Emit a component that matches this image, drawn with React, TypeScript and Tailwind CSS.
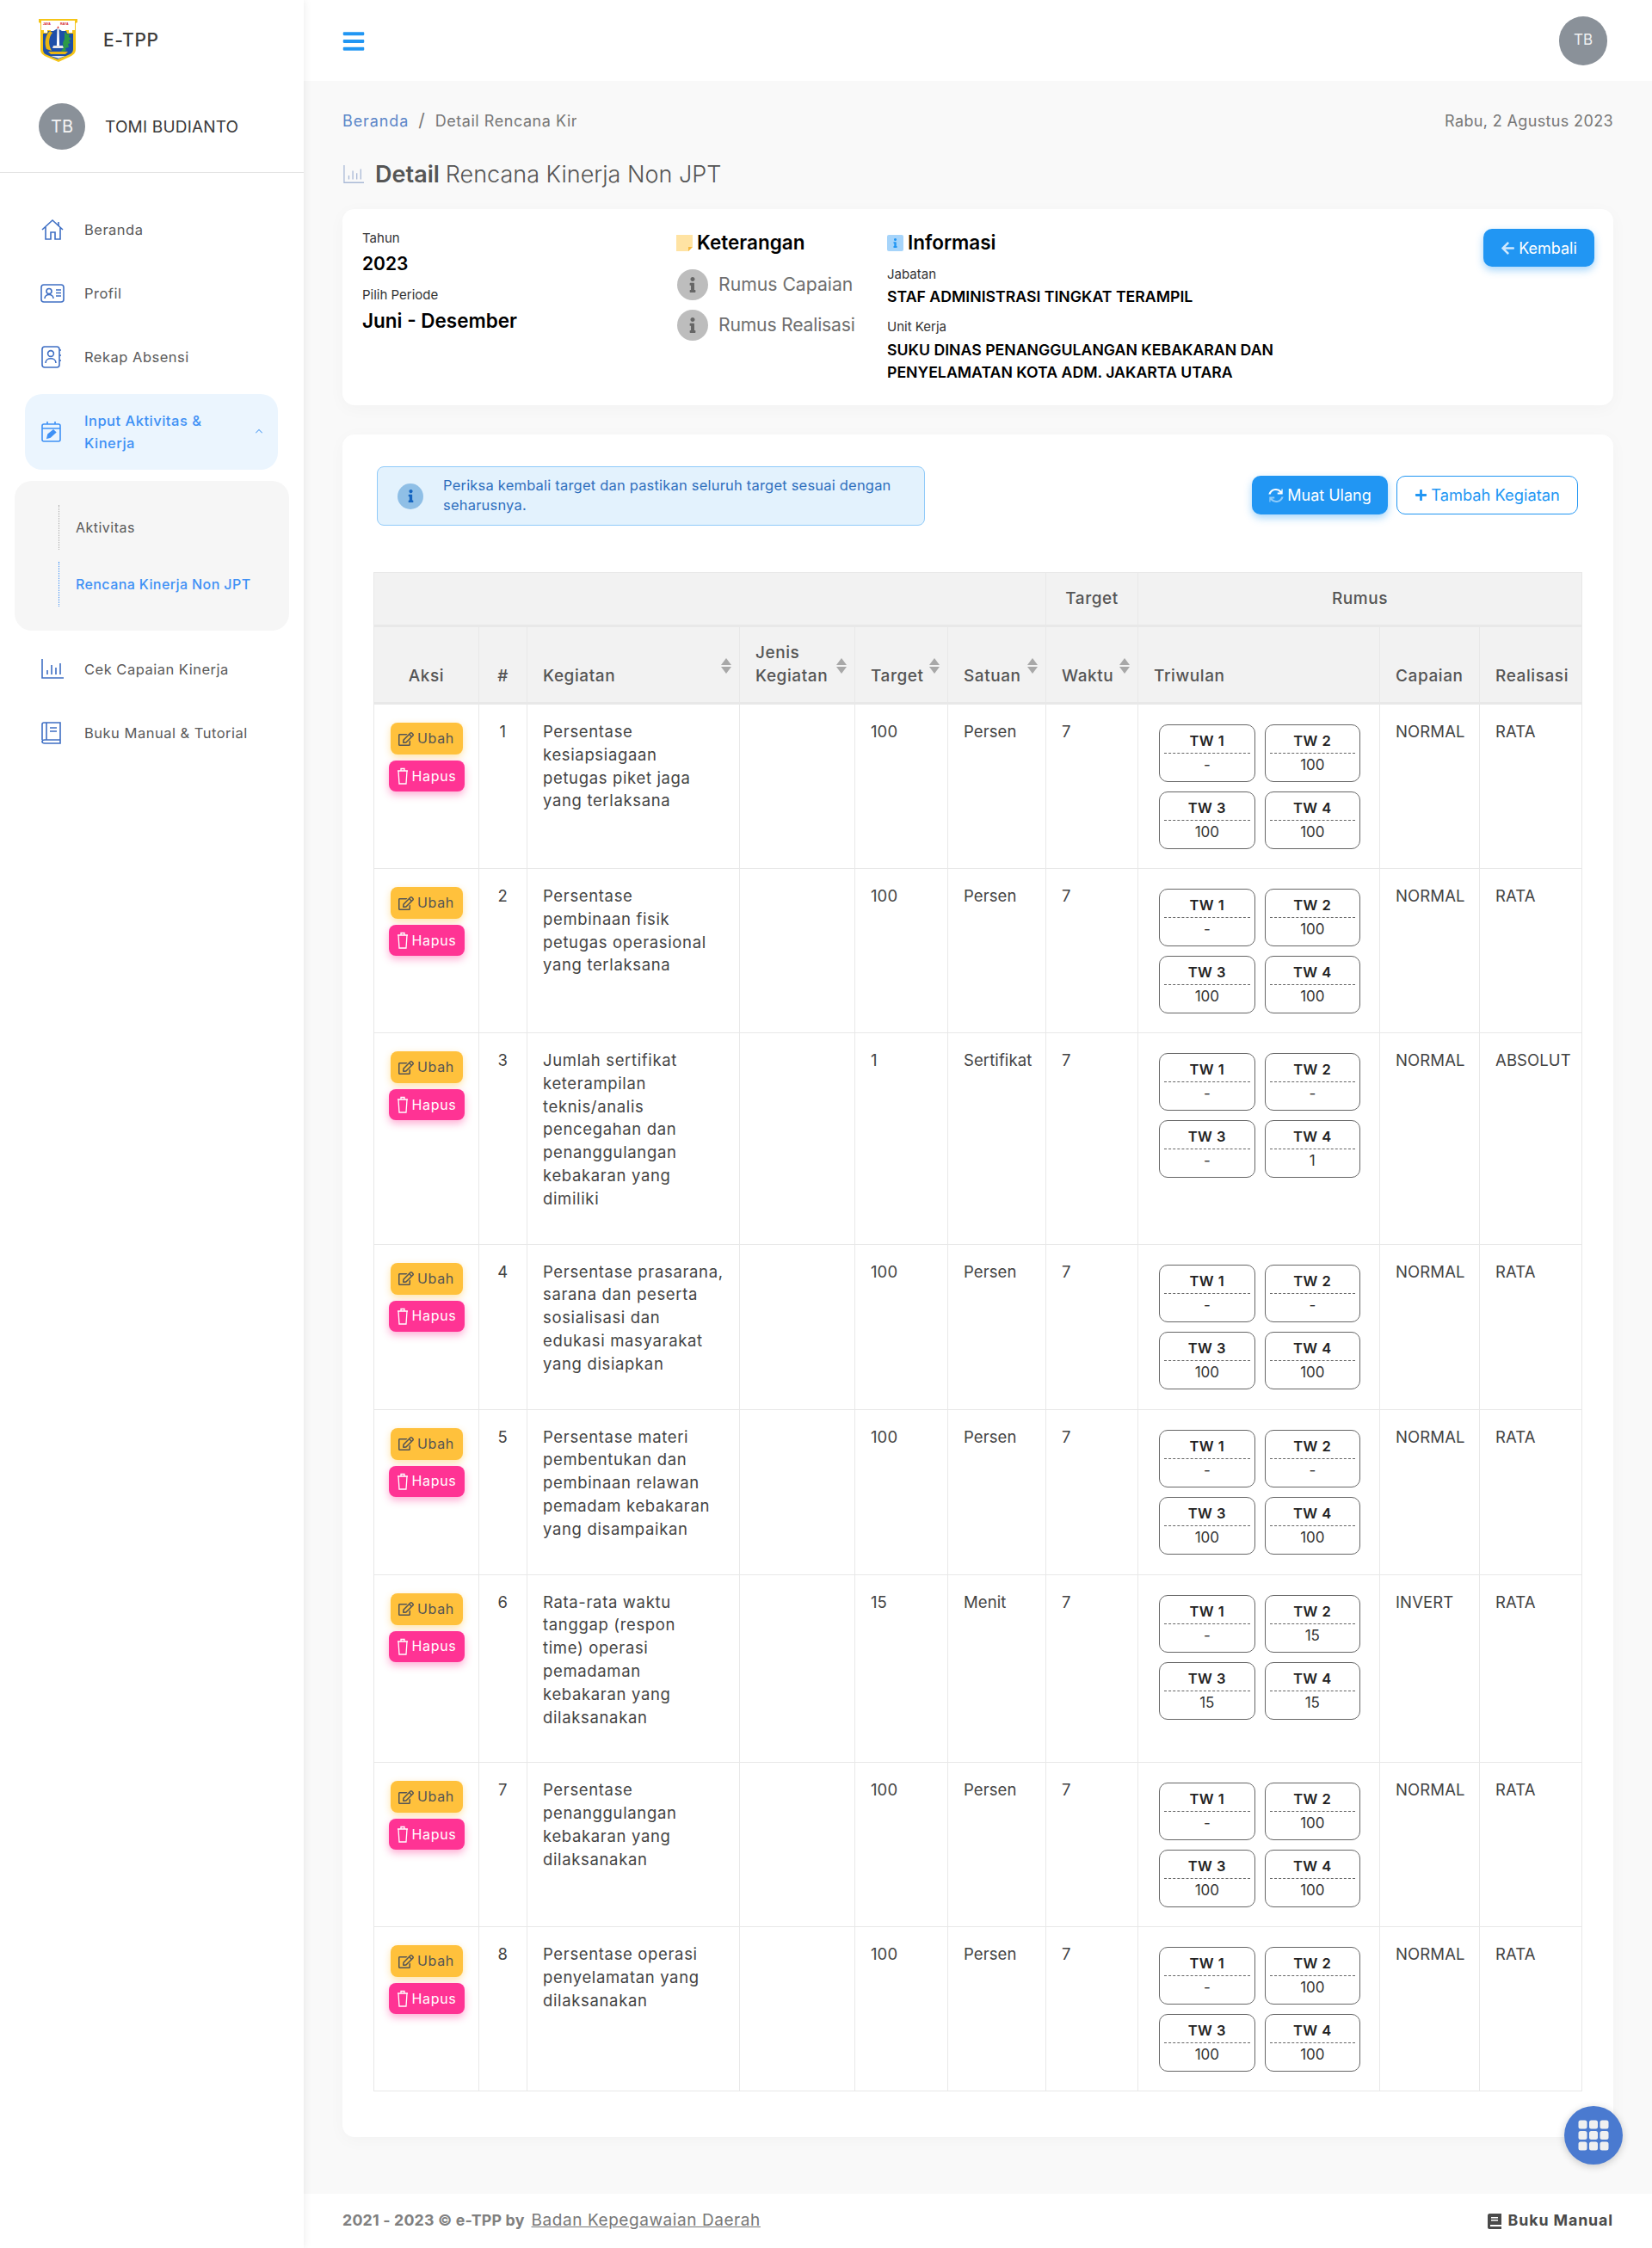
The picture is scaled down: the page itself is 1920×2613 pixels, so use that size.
import { FaArrowLeft, FaBars, FaInfo, FaPlus, FaRegEdit } from "react-icons/fa";
import { BsGrid3X3GapFill } from "react-icons/bs";

type Row = {
  no: number;
  kegiatan: string;
  target: string;
  satuan: string;
  tw: string[];
  capaian: string;
  realisasi: string;
};

const rows: Row[] = [
  { no: 1, kegiatan: "Persentase\nkesiapsiagaan\npetugas piket jaga\nyang terlaksana", target: "100", satuan: "Persen", tw: ["-", "100", "100", "100"], capaian: "NORMAL", realisasi: "RATA" },
  { no: 2, kegiatan: "Persentase\npembinaan fisik\npetugas operasional\nyang terlaksana", target: "100", satuan: "Persen", tw: ["-", "100", "100", "100"], capaian: "NORMAL", realisasi: "RATA" },
  { no: 3, kegiatan: "Jumlah sertifikat\nketerampilan\nteknis/analis\npencegahan dan\npenanggulangan\nkebakaran yang\ndimiliki", target: "1", satuan: "Sertifikat", tw: ["-", "-", "-", "1"], capaian: "NORMAL", realisasi: "ABSOLUT" },
  { no: 4, kegiatan: "Persentase prasarana,\nsarana dan peserta\nsosialisasi dan\nedukasi masyarakat\nyang disiapkan", target: "100", satuan: "Persen", tw: ["-", "-", "100", "100"], capaian: "NORMAL", realisasi: "RATA" },
  { no: 5, kegiatan: "Persentase materi\npembentukan dan\npembinaan relawan\npemadam kebakaran\nyang disampaikan", target: "100", satuan: "Persen", tw: ["-", "-", "100", "100"], capaian: "NORMAL", realisasi: "RATA" },
  { no: 6, kegiatan: "Rata-rata waktu\ntanggap (respon\ntime) operasi\npemadaman\nkebakaran yang\ndilaksanakan", target: "15", satuan: "Menit", tw: ["-", "15", "15", "15"], capaian: "INVERT", realisasi: "RATA" },
  { no: 7, kegiatan: "Persentase\npenanggulangan\nkebakaran yang\ndilaksanakan", target: "100", satuan: "Persen", tw: ["-", "100", "100", "100"], capaian: "NORMAL", realisasi: "RATA" },
  { no: 8, kegiatan: "Persentase operasi\npenyelamatan yang\ndilaksanakan", target: "100", satuan: "Persen", tw: ["-", "100", "100", "100"], capaian: "NORMAL", realisasi: "RATA" },
];

function Logo() {
  return (
    <svg viewBox="0 0 45 52" className="h-[52px] w-[45px]">
      <path d="M0 1h45v4l-2 1v30c0 5-3 7-7 9l-13 6-14-6c-4-2-7-4-7-9V6L0 5z" fill="#f5c518" />
      <path d="M3 3h39v11h-3v3h-4v-3h-4v3h-3l-5-3-5 3h-4v-3H10v3H6v-3H3z" fill="#fff" />
      <text x="5" y="7.5" fontSize="3.6" fontWeight="700" fill="#d3212d" fontFamily="Liberation Sans, sans-serif">JAYA</text>
      <text x="25" y="7.5" fontSize="3.6" fontWeight="700" fill="#d3212d" fontFamily="Liberation Sans, sans-serif">RAYA</text>
      <path d="M5 18h5l1-3h6l5-3 5 3h5l1 3h7v18c0 4-3 6-6 7l-12 5-12-5c-3-1-5-3-5-7z" fill="#1d4fa8" />
      <path d="M21.5 12h2l.6 20h-3.2z" fill="#fff" />
      <path d="M22.5 9l1.2 3h-2.4z" fill="#e53935" />
      <path d="M17 32h11l1 3H16z" fill="#e8e8e8" />
      <path d="M13 15c-5 4-7 14-4 21l6 2c-4-7-4-15 1-21z" fill="#e9b512" />
      <path d="M30 16l3 3 3-1-1 4 3 2-3 2 2 3-3 1 1 4-4 1 1 3-6 1 3-5-1-5 2-5z" fill="#2c9a47" />
      <path d="M11 39h23l-3 3H14z" fill="#e9b512" />
      <path d="M14 44h17l-8 3z" fill="#dfe7f3" />
    </svg>
  );
}

function NavIcon({ name }: { name: string }) {
  const cls = "h-[26px] w-[28px] fill-none stroke-[#3f6fc4] stroke-[1.6]";
  if (name === "home")
    return (
      <svg viewBox="0 0 28 26" className={cls}>
        <path d="M2 13L14 2l12 11M6 10v14h6v-8h5v8h6V10" />
        <path d="M21 4v5" />
      </svg>
    );
  if (name === "id")
    return (
      <svg viewBox="0 0 28 26" className={cls}>
        <rect x="1" y="3" width="26" height="20" rx="3" />
        <circle cx="10" cy="10.5" r="3" />
        <path d="M5 19c0-6 10-6 10 0M18 9h6M18 12.5h6M18 16h6" />
      </svg>
    );
  if (name === "contact")
    return (
      <svg viewBox="0 0 28 26" className={cls}>
        <rect x="2" y="1" width="20" height="24" rx="3" />
        <circle cx="12" cy="9" r="3.4" />
        <path d="M6 20c0-7 12-7 12 0M22 5h2M22 11h2M22 17h2" />
      </svg>
    );
  if (name === "chart")
    return (
      <svg viewBox="0 0 28 26" className={cls}>
        <path d="M2 1v22h25M8 19v-5M13 19V8M18 19v-8M23 19V6" />
      </svg>
    );
  return (
    <svg viewBox="0 0 28 26" className={cls}>
      <path d="M2 21V3c0-1 1-2 2-2h19v20H5c-2 0-3 1-3 2s1 2 3 2h18v-4M7 1v20M11 7h8M11 11h8" />
    </svg>
  );
}

function NavItem({ icon, label }: { icon: string; label: string }) {
  return (
    <div className="flex h-[74px] items-center pl-[47px] text-[16.5px] tracking-[0.03em] text-[#5a5a5a]">
      <span className="w-[51px]">
        <NavIcon name={icon} />
      </span>
      {label}
    </div>
  );
}

function Sidebar() {
  return (
    <aside className="z-10 w-[353px] shrink-0 bg-white shadow-[2px_0_8px_rgba(0,0,0,0.06)]">
      <div className="flex h-[94px] items-center pl-[45px]">
        <Logo />
        <span className="ml-[30px] text-[21px] font-medium tracking-[0.03em] text-[#3c3c3c]">E-TPP</span>
      </div>
      <div className="flex h-[107px] items-start border-b border-[#e4e4e4] pl-[45px] pt-[26px]">
        <div className="flex h-[54px] w-[54px] items-center justify-center rounded-full bg-[#8a9199] text-[20px] text-[#f4f4f4]">TB</div>
        <span className="ml-[23px] mt-[14px] text-[19px] tracking-[0.01em] text-[#3a3a3a]">TOMI BUDIANTO</span>
      </div>
      <nav className="pt-[29px]">
        <NavItem icon="home" label="Beranda" />
        <NavItem icon="id" label="Profil" />
        <NavItem icon="contact" label="Rekap Absensi" />
        <div className="ml-[29px] mt-[6px] flex h-[88px] w-[294px] items-center rounded-[20px] bg-[#ebf5fe] pl-[18px] pr-[17px] text-[16.5px] leading-[26px] tracking-[0.03em] text-[#3f91f5]">
          <span className="w-[51px]">
            <svg viewBox="0 0 28 26" className="h-[26px] w-[28px] fill-none stroke-[#3f91f5] stroke-[1.6]">
              <rect x="2" y="4" width="21" height="20" rx="2" />
              <path d="M2 9h21M8 1v3M17 1v3" />
              <path d="M8 20l1-4 6-5 2.5 2.5-6 5.5z" fill="#3f91f5" />
            </svg>
          </span>
          <span className="font-medium">
            Input Aktivitas &
            <br />
            Kinerja
          </span>
          <svg viewBox="0 0 12 8" className="mb-[2px] ml-auto h-[6px] w-[10px] fill-none stroke-[#5aa2f2] stroke-[1.4]">
            <path d="M1 7l5-5 5 5" />
          </svg>
        </div>
        <div className="ml-[17px] mt-[13px] h-[174px] w-[319px] rounded-[20px] bg-[#f6f6f6] pt-[28px]">
          <div className="ml-[51px] flex h-[52px] items-center border-l border-dotted border-[#aaaaaa] pl-[19px] text-[16px] tracking-[0.03em] text-[#5a5a5a]">Aktivitas</div>
          <div className="ml-[51px] mt-[14px] flex h-[52px] items-center border-l border-dotted border-[#3f91f5] pl-[19px] text-[16px] font-medium tracking-[0.025em] text-[#3f91f5]">Rencana Kinerja Non JPT</div>
        </div>
        <div className="mt-[8px]">
          <NavItem icon="chart" label="Cek Capaian Kinerja" />
          <NavItem icon="book" label="Buku Manual & Tutorial" />
        </div>
      </nav>
    </aside>
  );
}

function SortArrows() {
  return (
    <svg viewBox="0 0 12 18" className="absolute right-[9px] top-[36px] h-[18px] w-[12px] fill-[#a8a8a8]">
      <path d="M6 0l6 8H0zM0 10h12l-6 8z" />
    </svg>
  );
}

function TwBox({ label, value }: { label: string; value: string }) {
  return (
    <div className="flex h-[67px] flex-col rounded-[10px] border border-[#666666] bg-white px-[5px] text-center">
      <div className="flex h-[32px] items-end justify-center pb-[2px] text-[16.5px] font-semibold leading-[24px] tracking-[0.03em] text-[#222222]">{label}</div>
      <div className="border-t border-dashed border-[#666666] pt-[1px] text-[17px] leading-[24px] tracking-normal text-[#333333]">{value}</div>
    </div>
  );
}

function ActionButtons() {
  return (
    <div className="flex flex-col items-center gap-[7px]">
      <button className="flex h-[37px] w-[84px] items-center justify-center gap-[4px] rounded-[8px] bg-[#ffc13c] text-[16px] text-[#555555] shadow-[0_3px_8px_rgba(255,193,60,0.45)]">
        <FaRegEdit className="h-[18px] w-[18px]" />
        Ubah
      </button>
      <button className="flex h-[36px] w-[88px] items-center justify-center gap-[4px] rounded-[8px] bg-[#ff3394] text-[16px] text-white shadow-[0_4px_10px_rgba(255,51,148,0.4)]">
        <svg viewBox="0 0 14 20" className="h-[20px] w-[14px] fill-none stroke-white stroke-[1.3]">
          <path d="M1 4h12M2 4l1 15h8l1-15M5 4V1.5h4V4" />
        </svg>
        Hapus
      </button>
    </div>
  );
}

function DataTable() {
  const th = "relative border border-[#e8e8e8] border-b-[3px] px-[18px] pb-[17px] align-bottom text-[19px] font-medium leading-[27px] tracking-[0.03em] text-[#555555]";
  const td = "border border-[#e8e8e8] px-[18px] pb-[39px] pt-[18px] align-top";
  const tdPlain = "border border-[#e8e8e8] px-[18px] pb-[39px] pt-[18px] align-top tracking-[0.005em]";
  return (
    <table className="w-[1404px] table-fixed border-collapse text-[18.5px] leading-[26.8px] tracking-[0.035em] text-[#444444]">
      <colgroup>
        <col className="w-[122px]" />
        <col className="w-[56px]" />
        <col className="w-[247px]" />
        <col className="w-[134px]" />
        <col className="w-[108px]" />
        <col className="w-[114px]" />
        <col className="w-[107px]" />
        <col className="w-[281px]" />
        <col className="w-[116px]" />
        <col className="w-[119px]" />
      </colgroup>
      <thead className="bg-[#f2f2f2]">
        <tr className="h-[62px]">
          <th colSpan={6} className="border border-[#e8e8e8] border-b-[3px]" />
          <th className="border border-[#e8e8e8] border-b-[3px] text-center text-[19px] font-medium tracking-[0.03em] text-[#555555]">Target</th>
          <th colSpan={3} className="border border-[#e8e8e8] border-b-[3px] text-center text-[19px] font-medium tracking-[0.03em] text-[#555555]">Rumus</th>
        </tr>
        <tr className="h-[90px]">
          <th className={`${th} text-center`}>Aksi</th>
          <th className={`${th} text-center`}>#</th>
          <th className={`${th} text-left`}>
            Kegiatan
            <SortArrows />
          </th>
          <th className={`${th} text-left`}>
            Jenis
            <br />
            Kegiatan
            <SortArrows />
          </th>
          <th className={`${th} text-left`}>
            Target
            <SortArrows />
          </th>
          <th className={`${th} text-left`}>
            Satuan
            <SortArrows />
          </th>
          <th className={`${th} text-left`}>
            Waktu
            <SortArrows />
          </th>
          <th className={`${th} text-left`}>Triwulan</th>
          <th className={`${th} text-left`}>Capaian</th>
          <th className={`${th} text-left`}>Realisasi</th>
        </tr>
      </thead>
      <tbody>
        {rows.map((row) => (
          <tr key={row.no}>
            <td className="border border-[#e8e8e8] pt-[21px] align-top">
              <ActionButtons />
            </td>
            <td className={`${td} text-center`}>{row.no}</td>
            <td className={`${td} whitespace-pre-line`}>{row.kegiatan}</td>
            <td className={td} />
            <td className={tdPlain}>{row.target}</td>
            <td className={tdPlain}>{row.satuan}</td>
            <td className={td}>7</td>
            <td className="border border-[#e8e8e8] pb-[22px] pl-[24px] pr-[22px] pt-[23px] align-top">
              <div className="grid grid-cols-2 gap-[11px]">
                {row.tw.map((value, i) => (
                  <TwBox key={i} label={`TW ${i + 1}`} value={value} />
                ))}
              </div>
            </td>
            <td className={tdPlain}>{row.capaian}</td>
            <td className={tdPlain}>{row.realisasi}</td>
          </tr>
        ))}
      </tbody>
    </table>
  );
}

function InfoCard() {
  return (
    <div className="flex h-[228px] rounded-[14px] bg-white pl-[23px] pr-[22px] pt-[23px] text-black shadow-[0_4px_20px_rgba(0,0,0,0.03)]">
      <div className="w-[365px]">
        <div className="text-[15px] leading-[22px] text-[#333333]">Tahun</div>
        <div className="mt-[4px] text-[21px] font-semibold leading-[30px]">2023</div>
        <div className="mt-[10px] text-[15px] leading-[22px] text-[#333333]">Pilih Periode</div>
        <div className="mt-[4px] text-[22.5px] font-semibold leading-[30px]">Juni - Desember</div>
      </div>
      <div className="w-[245px] pt-[1px]">
        <div className="flex items-center gap-[5px] text-[22.5px] font-semibold leading-[30px]">
          <svg viewBox="0 0 19 19" className="h-[19px] w-[19px]">
            <path d="M0 0h19v14l-5 5H0z" fill="#ffe3a3" />
            <path d="M14 19v-5h5z" fill="#f5b83d" />
          </svg>
          Keterangan
        </div>
        <div className="ml-[1px] mt-[16px] flex h-[36px] items-center gap-[12px] text-[21.2px] text-[#6f6f6f]">
          <span className="flex h-[36px] w-[36px] items-center justify-center rounded-full bg-[#bdbdbd]">
            <FaInfo className="h-[18px] w-[18px] text-[#666666]" />
          </span>
          Rumus Capaian
        </div>
        <div className="ml-[1px] mt-[11px] flex h-[36px] items-center gap-[12px] text-[21.2px] tracking-[-0.01em] text-[#6f6f6f]">
          <span className="flex h-[36px] w-[36px] items-center justify-center rounded-full bg-[#bdbdbd]">
            <FaInfo className="h-[18px] w-[18px] text-[#666666]" />
          </span>
          Rumus Realisasi
        </div>
      </div>
      <div className="flex-1 pt-[1px]">
        <div className="flex items-center gap-[5px] text-[22.5px] font-semibold leading-[30px]">
          <span className="flex h-[19px] w-[19px] items-center justify-center rounded-[2px] bg-[#a6d4fa]">
            <FaInfo className="h-[11px] w-[11px] text-[#2196f3]" />
          </span>
          Informasi
        </div>
        <div className="mt-[11px] text-[15px] leading-[22px] text-[#333333]">Jabatan</div>
        <div className="mt-[2px] text-[17.7px] font-semibold leading-[26px]">STAF ADMINISTRASI TINGKAT TERAMPIL</div>
        <div className="mt-[11px] text-[15px] leading-[22px] text-[#333333]">Unit Kerja</div>
        <div className="mt-[3px] text-[17.7px] font-semibold leading-[26px]">
          SUKU DINAS PENANGGULANGAN KEBAKARAN DAN
          <br />
          PENYELAMATAN KOTA ADM. JAKARTA UTARA
        </div>
      </div>
      <button className="flex h-[44px] w-[129px] items-center justify-center gap-[4px] rounded-[10px] bg-[#2196f3] text-[18px] text-white shadow-[0_4px_10px_rgba(33,150,243,0.4)]">
        <FaArrowLeft className="h-[17px] w-[17px] text-[#cfe8fd]" />
        Kembali
      </button>
    </div>
  );
}

function TableCard() {
  return (
    <div className="mt-[34px] rounded-[14px] bg-white pb-[53px] pl-[36px] pr-[35px] pt-[37px] shadow-[0_4px_20px_rgba(0,0,0,0.03)]">
      <div className="flex items-start justify-between">
        <div className="ml-[4px] flex h-[69px] w-[637px] items-center rounded-[8px] border border-[#90caf9] bg-[#e3f2fd] pl-[23px] text-[16.5px] leading-[23px] tracking-[0.012em] text-[#2f6fbd]">
          <span className="mr-[23px] flex h-[30px] w-[30px] shrink-0 items-center justify-center rounded-full bg-[#8fbfe6]">
            <FaInfo className="h-[15px] w-[15px] text-[#1565c0]" />
          </span>
          <span className="-mt-[2px]">
            Periksa kembali target dan pastikan seluruh target sesuai dengan
            <br />
            seharusnya.
          </span>
        </div>
        <div className="mr-[6px] mt-[11px] flex gap-[10px]">
          <button className="flex h-[45px] w-[158px] items-center justify-center gap-[4px] rounded-[10px] bg-[#2196f3] text-[18px] text-white shadow-[0_4px_10px_rgba(33,150,243,0.4)]">
            <svg viewBox="0 0 512 512" className="h-[18px] w-[18px]">
              <path fill="#ffffff" d="M440 40l-3 75A248 248 0 0 0 9 213h70a176 176 0 0 1 310-60l-83 4-1 55h170V40z" />
              <path fill="#8ecbfa" d="M72 472l3-75a248 248 0 0 0 428-98h-70a176 176 0 0 1-310 60l83-4 1-55H37v172z" />
            </svg>
            Muat Ulang
          </button>
          <button className="flex h-[45px] w-[211px] items-center justify-center gap-[4px] rounded-[10px] border border-[#2196f3] bg-white text-[18.3px] text-[#2196f3]">
            <FaPlus className="h-[15px] w-[15px]" />
            Tambah Kegiatan
          </button>
        </div>
      </div>
      <div className="mt-[54px]">
        <DataTable />
      </div>
    </div>
  );
}

export default function App() {
  return (
    <div className="flex min-h-[2613px] w-[1920px] bg-[#f9f9f9] font-[Inter,sans-serif]">
      <Sidebar />
      <div className="flex min-w-0 flex-1 flex-col">
        <header className="flex h-[94px] items-center justify-between bg-white pl-[45px] pr-[52px]">
          <FaBars className="mt-[2px] h-[28px] w-[26px] text-[#2196f3]" />
          <div className="flex h-[57px] w-[56px] items-center justify-center rounded-full bg-[#8a9199] text-[17px] text-[#f0f0f0]">TB</div>
        </header>
        <main className="flex-1 px-[45px] pt-[33px]">
          <div className="flex h-[26px] items-center justify-between text-[18px] text-[#777777]">
            <div className="flex items-center tracking-[0.05em]">
              <span className="text-[#5c86c8]">Beranda</span>
              <span className="mx-[11px] text-[21px]">/</span>
              <span className="w-[164px] overflow-hidden whitespace-nowrap tracking-[0.03em]">Detail Rencana Kinerja Non JPT</span>
            </div>
            <span className="tracking-[0.02em]">Rabu, 2 Agustus 2023</span>
          </div>
          <h1 className="mt-[30px] flex h-[40px] items-center text-[27px] font-light text-[#555555]">
            <svg viewBox="0 0 28 26" className="mr-[12px] h-[24px] w-[26px] fill-none stroke-[#a9b9d6] stroke-[1.4]">
              <path d="M2 1v22h25M8 19v-5M13 19V8M18 19v-8M23 19V6" />
            </svg>
            <span className="mr-[7px] font-semibold">Detail</span>
            Rencana Kinerja Non JPT
          </h1>
          <div className="mt-[20px]">
            <InfoCard />
            <TableCard />
          </div>
        </main>
        <footer className="flex h-[63px] items-center justify-between bg-white px-[45px] text-[17.8px] tracking-[0.01em]">
          <div className="font-bold text-[#808080]">
            2021 - 2023 © e-TPP by
            <span className="ml-[8px] text-[19px] font-normal tracking-[0.03em] text-[#777777] underline">Badan Kepegawaian Daerah</span>
          </div>
          <div className="flex items-center gap-[8px] font-bold tracking-[0.05em] text-[#4a4a4a]">
            <svg viewBox="0 0 16 18" className="h-[18px] w-[16px]">
              <path d="M2 0h14v13H3v2h13v3H2c-1 0-2-1-2-2V2c0-1 1-2 2-2z" fill="#4a4a4a" />
              <path d="M4 4h8v1.5H4zM4 7h8v1.5H4z" fill="#ffffff" />
            </svg>
            Buku Manual
          </div>
        </footer>
      </div>
      <button className="fixed bottom-[97px] left-[1818px] flex h-[68px] w-[68px] items-center justify-center rounded-full bg-[#4a7ad0] shadow-[0_2px_10px_rgba(0,0,0,0.2)]">
        <BsGrid3X3GapFill className="h-[40px] w-[40px] text-[#f0f0f0]" />
      </button>
    </div>
  );
}
